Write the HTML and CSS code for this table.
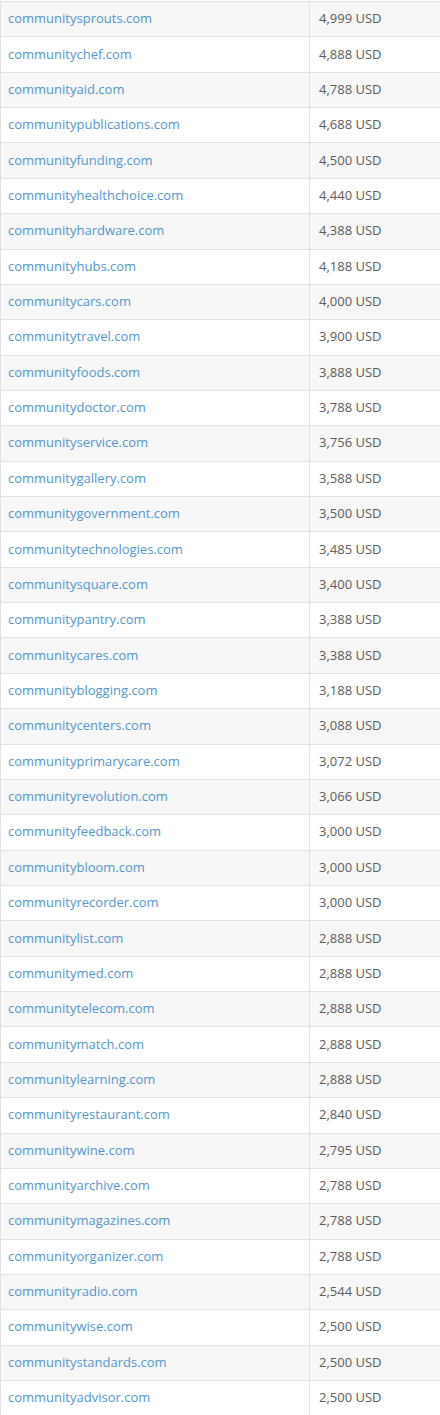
FILE: index.html
```html
<!DOCTYPE html>
<html lang="en">
<head>
<meta charset="utf-8">
<title>Domains</title>
<link rel="stylesheet" href="styles.css">
</head>
<body>
<div class="wrap">
<table class="domains">
<tbody>
<tr><td class="name"><a href="#">communitysprouts.com</a></td><td class="price">4,999 USD</td></tr>
<tr><td class="name"><a href="#">communitychef.com</a></td><td class="price">4,888 USD</td></tr>
<tr><td class="name"><a href="#">communityaid.com</a></td><td class="price">4,788 USD</td></tr>
<tr><td class="name"><a href="#">communitypublications.com</a></td><td class="price">4,688 USD</td></tr>
<tr><td class="name"><a href="#">communityfunding.com</a></td><td class="price">4,500 USD</td></tr>
<tr><td class="name"><a href="#">communityhealthchoice.com</a></td><td class="price">4,440 USD</td></tr>
<tr><td class="name"><a href="#">communityhardware.com</a></td><td class="price">4,388 USD</td></tr>
<tr><td class="name"><a href="#">communityhubs.com</a></td><td class="price">4,188 USD</td></tr>
<tr><td class="name"><a href="#">communitycars.com</a></td><td class="price">4,000 USD</td></tr>
<tr><td class="name"><a href="#">communitytravel.com</a></td><td class="price">3,900 USD</td></tr>
<tr><td class="name"><a href="#">communityfoods.com</a></td><td class="price">3,888 USD</td></tr>
<tr><td class="name"><a href="#">communitydoctor.com</a></td><td class="price">3,788 USD</td></tr>
<tr><td class="name"><a href="#">communityservice.com</a></td><td class="price">3,756 USD</td></tr>
<tr><td class="name"><a href="#">communitygallery.com</a></td><td class="price">3,588 USD</td></tr>
<tr><td class="name"><a href="#">communitygovernment.com</a></td><td class="price">3,500 USD</td></tr>
<tr><td class="name"><a href="#">communitytechnologies.com</a></td><td class="price">3,485 USD</td></tr>
<tr><td class="name"><a href="#">communitysquare.com</a></td><td class="price">3,400 USD</td></tr>
<tr><td class="name"><a href="#">communitypantry.com</a></td><td class="price">3,388 USD</td></tr>
<tr><td class="name"><a href="#">communitycares.com</a></td><td class="price">3,388 USD</td></tr>
<tr><td class="name"><a href="#">communityblogging.com</a></td><td class="price">3,188 USD</td></tr>
<tr><td class="name"><a href="#">communitycenters.com</a></td><td class="price">3,088 USD</td></tr>
<tr><td class="name"><a href="#">communityprimarycare.com</a></td><td class="price">3,072 USD</td></tr>
<tr><td class="name"><a href="#">communityrevolution.com</a></td><td class="price">3,066 USD</td></tr>
<tr><td class="name"><a href="#">communityfeedback.com</a></td><td class="price">3,000 USD</td></tr>
<tr><td class="name"><a href="#">communitybloom.com</a></td><td class="price">3,000 USD</td></tr>
<tr><td class="name"><a href="#">communityrecorder.com</a></td><td class="price">3,000 USD</td></tr>
<tr><td class="name"><a href="#">communitylist.com</a></td><td class="price">2,888 USD</td></tr>
<tr><td class="name"><a href="#">communitymed.com</a></td><td class="price">2,888 USD</td></tr>
<tr><td class="name"><a href="#">communitytelecom.com</a></td><td class="price">2,888 USD</td></tr>
<tr><td class="name"><a href="#">communitymatch.com</a></td><td class="price">2,888 USD</td></tr>
<tr><td class="name"><a href="#">communitylearning.com</a></td><td class="price">2,888 USD</td></tr>
<tr><td class="name"><a href="#">communityrestaurant.com</a></td><td class="price">2,840 USD</td></tr>
<tr><td class="name"><a href="#">communitywine.com</a></td><td class="price">2,795 USD</td></tr>
<tr><td class="name"><a href="#">communityarchive.com</a></td><td class="price">2,788 USD</td></tr>
<tr><td class="name"><a href="#">communitymagazines.com</a></td><td class="price">2,788 USD</td></tr>
<tr><td class="name"><a href="#">communityorganizer.com</a></td><td class="price">2,788 USD</td></tr>
<tr><td class="name"><a href="#">communityradio.com</a></td><td class="price">2,544 USD</td></tr>
<tr><td class="name"><a href="#">communitywise.com</a></td><td class="price">2,500 USD</td></tr>
<tr><td class="name"><a href="#">communitystandards.com</a></td><td class="price">2,500 USD</td></tr>
<tr><td class="name"><a href="#">communityadvisor.com</a></td><td class="price">2,500 USD</td></tr>
</tbody>
</table>
</div>
</body>
</html>
```

FILE: styles.css
```css
html, body {
  margin: 0;
  padding: 0;
  background: #ffffff;
}

body {
  font-family: "Open Sans", "Liberation Sans", sans-serif;
  font-size: 13px;
  color: #5c5c5c;
  overflow: hidden;
}

.wrap {
  padding-top: 1px;
}

.domains {
  width: 100%;
  border-collapse: collapse;
  border-left: 1px solid #e2e2e2;
}

.domains td {
  border-top: 1px solid #e2e2e2;
  padding: 0 8px 2px;
  height: 32.36px;
  line-height: 18px;
  vertical-align: middle;
  box-sizing: content-box;
}

.domains tr:nth-child(odd) td {
  background: #f7f7f7;
}

.domains .name {
  width: 293px;
  padding-left: 7px;
  border-right: 1px solid #e2e2e2;
}

.domains .price {
  padding-left: 9px;
}

.domains a {
  color: #5596cf;
  text-decoration: none;
}
```
